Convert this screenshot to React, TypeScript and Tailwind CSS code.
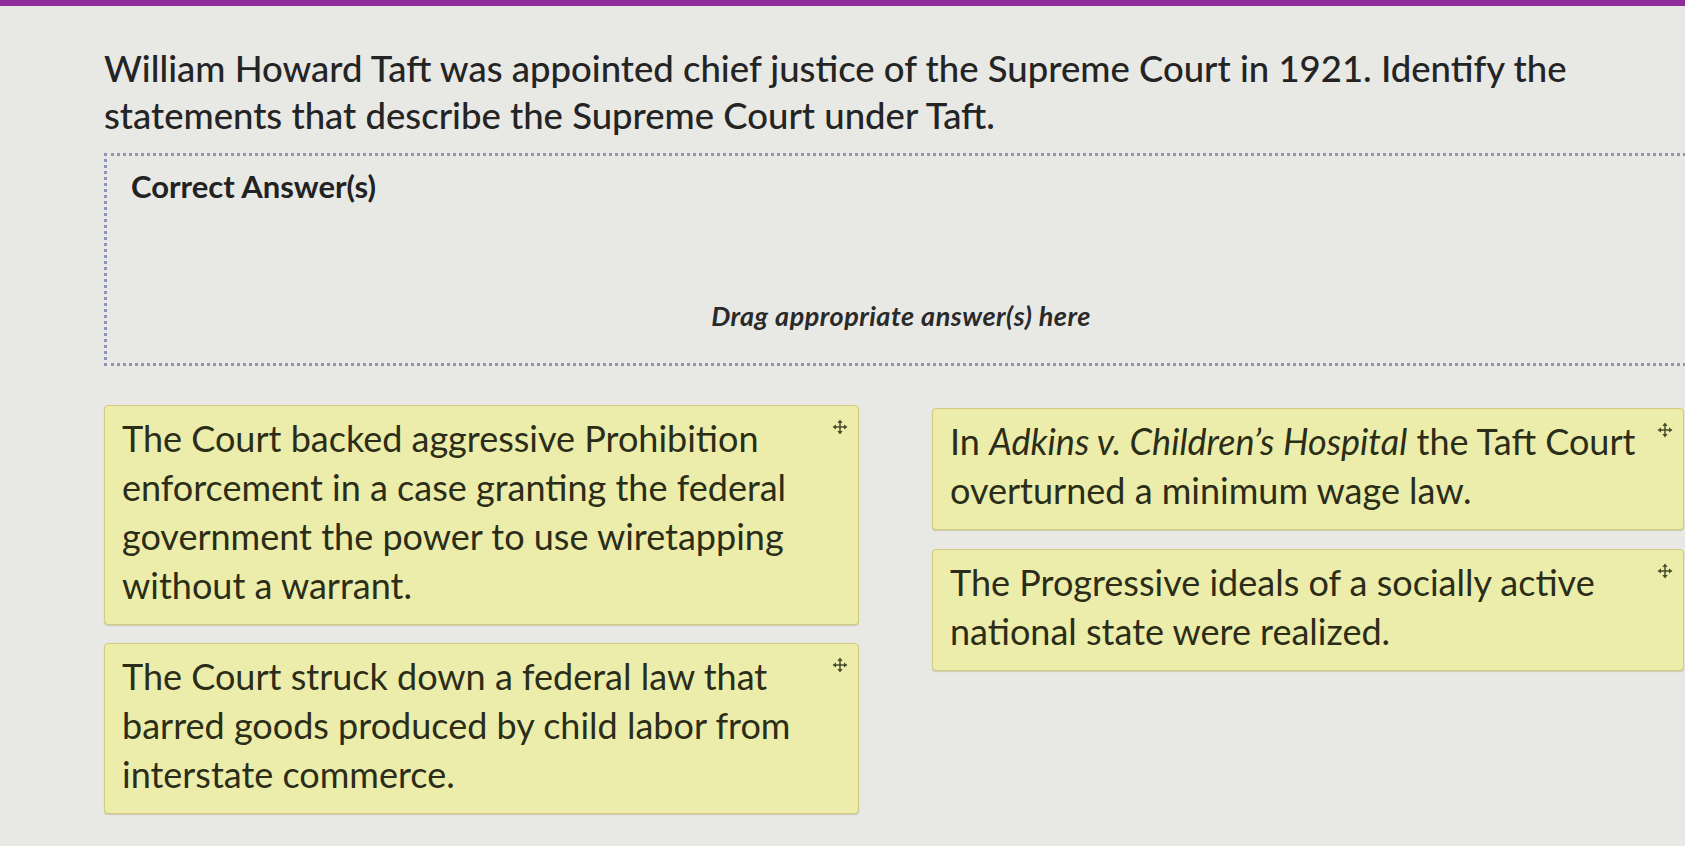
import type { ReactNode } from 'react';

type Answer = {
  id: string;
  content: ReactNode;
};

const leftAnswers: Answer[] = [
  {
    id: 'wiretapping',
    content:
      'The Court backed aggressive Prohibition enforcement in a case granting the federal government the power to use wiretapping without a warrant.',
  },
  {
    id: 'child-labor',
    content:
      'The Court struck down a federal law that barred goods produced by child labor from interstate commerce.',
  },
];

const rightAnswers: Answer[] = [
  {
    id: 'adkins',
    content: (
      <>
        In <i>Adkins v. Children’s Hospital</i> the Taft Court overturned a
        minimum wage law.
      </>
    ),
  },
  {
    id: 'progressive',
    content:
      'The Progressive ideals of a socially active national state were realized.',
  },
];

function MoveHandle() {
  return (
    <svg
      viewBox="0 0 16 16"
      className="mt-[5px] h-[16px] w-[16px] shrink-0 text-[#474c2b]"
      fill="currentColor"
      aria-hidden="true"
    >
      <path d="M8 3v10M3 8h10" stroke="currentColor" strokeWidth="1.5" />
      <path d="M8 0.5 10.6 4H5.4Z" />
      <path d="M8 15.5 5.4 12h5.2Z" />
      <path d="M0.5 8 4 5.4v5.2Z" />
      <path d="M15.5 8 12 10.6V5.4Z" />
    </svg>
  );
}

function AnswerCard({ answer }: { answer: Answer }) {
  return (
    <div className="flex cursor-move items-start gap-[6px] rounded-[4px] border border-[#d3ca7e] bg-[#ecedab] pt-[8px] pr-[10px] pb-[14px] pl-[17px] shadow-[0_1px_1px_rgba(120,110,40,0.25)]">
      <p className="flex-1 text-[36px] leading-[49px] text-[#2b2d18]">
        {answer.content}
      </p>
      <MoveHandle />
    </div>
  );
}

export default function App() {
  return (
    <main className="min-h-screen w-full overflow-hidden bg-[#e8e8e5] font-['Lato','Noto_Sans',sans-serif]">
      <div className="h-[6px] w-full bg-[#8d2d9b]" />

      <section className="w-[1644px] pt-[39px] pl-[104px]">
        <h1 className="text-[36.5px] leading-[47px] font-medium text-[#242424]">
          William Howard Taft was appointed chief justice of the Supreme Court
          in 1921. Identify the statements that describe the Supreme Court
          under Taft.
        </h1>

        <div className="mt-[14px] flex h-[213px] w-[1594px] flex-col justify-between border-[3px] border-dotted border-[#8e95b4] pt-[12px] pb-[31px] pl-[24px]">
          <p className="text-[31px] leading-[36px] font-bold text-[#222222]">
            Correct Answer(s)
          </p>
          <p className="pr-[24px] text-center text-[27px] leading-[32px] font-bold tracking-[0.5px] italic text-[#2a2a2a]">
            Drag appropriate answer(s) here
          </p>
        </div>

        <div className="mt-[39px] flex w-[1590px] items-start gap-[73px]">
          <div className="flex w-[755px] flex-col gap-[18px]">
            {leftAnswers.map((answer) => (
              <AnswerCard key={answer.id} answer={answer} />
            ))}
          </div>
          <div className="mt-[3px] flex w-[752px] flex-col gap-[19px]">
            {rightAnswers.map((answer) => (
              <AnswerCard key={answer.id} answer={answer} />
            ))}
          </div>
        </div>
      </section>
    </main>
  );
}
